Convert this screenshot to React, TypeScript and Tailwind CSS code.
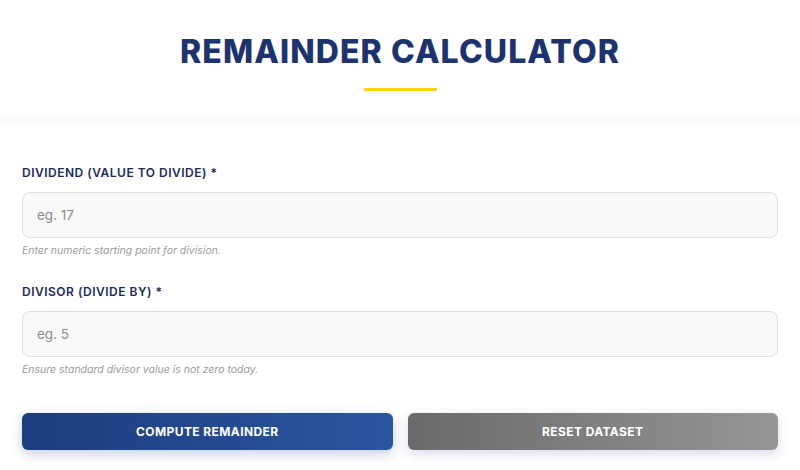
import React from "react";

const Field = ({
  label,
  placeholder,
  hint,
}: {
  label: string;
  placeholder: string;
  hint: string;
}) => (
  <div className="flex flex-col">
    <label className="text-[12px] font-semibold uppercase tracking-[0.5px] text-[#1b2a5c] leading-none">
      {label} <span className="text-[#1b2a5c]">*</span>
    </label>
    <input
      type="text"
      placeholder={placeholder}
      className="mt-[13px] h-[46px] w-full rounded-[8px] border border-[#dedede] bg-[#f9f9f9] px-[14px] text-[13.5px] text-[#333] placeholder:text-[#8a8a8a] focus:outline-none"
    />
    <p className="mt-[8px] text-[10.5px] italic text-[#9a9a9a] leading-none">{hint}</p>
  </div>
);

const App = () => {
  return (
    <div
      className="h-[470px] w-[800px] overflow-hidden bg-white"
      style={{ fontFamily: "Inter, 'Noto Sans', sans-serif" }}
    >
      {/* Title block */}
      <header className="flex flex-col items-center pt-[33px]">
        <h1 className="text-[32px] font-extrabold uppercase leading-[38px] tracking-[1.1px] text-[#1c3370]">
          Remainder Calculator
        </h1>
        <div className="mt-[17px] h-[3px] w-[73px] bg-[#fcd116]" />
      </header>
      <div className="mt-[21px] h-[16px] bg-gradient-to-b from-white via-[#f9f9f9] to-white" />

      {/* Form */}
      <form className="flex flex-col px-[22px] pt-[39px]">
        <Field
          label="Dividend (value to divide)"
          placeholder="eg. 17"
          hint="Enter numeric starting point for division."
        />
        <div className="mt-[29px]">
          <Field
            label="Divisor (divide by)"
            placeholder="eg. 5"
            hint="Ensure standard divisor value is not zero today."
          />
        </div>

        <div className="mt-[38px] grid grid-cols-2 gap-[15px]">
          <button
            type="button"
            className="h-[37px] rounded-[6px] bg-gradient-to-r from-[#1d3d7e] to-[#2a56a0] text-[12px] font-bold uppercase tracking-[0.4px] text-white shadow-[0_4px_12px_rgba(30,60,130,0.25)]"
          >
            Compute Remainder
          </button>
          <button
            type="button"
            className="h-[37px] rounded-[6px] bg-gradient-to-r from-[#6a6a6a] to-[#969696] text-[12px] font-bold uppercase tracking-[0.4px] text-white shadow-[0_4px_12px_rgba(60,70,150,0.2)]"
          >
            Reset Dataset
          </button>
        </div>
      </form>
    </div>
  );
};

export default App;
